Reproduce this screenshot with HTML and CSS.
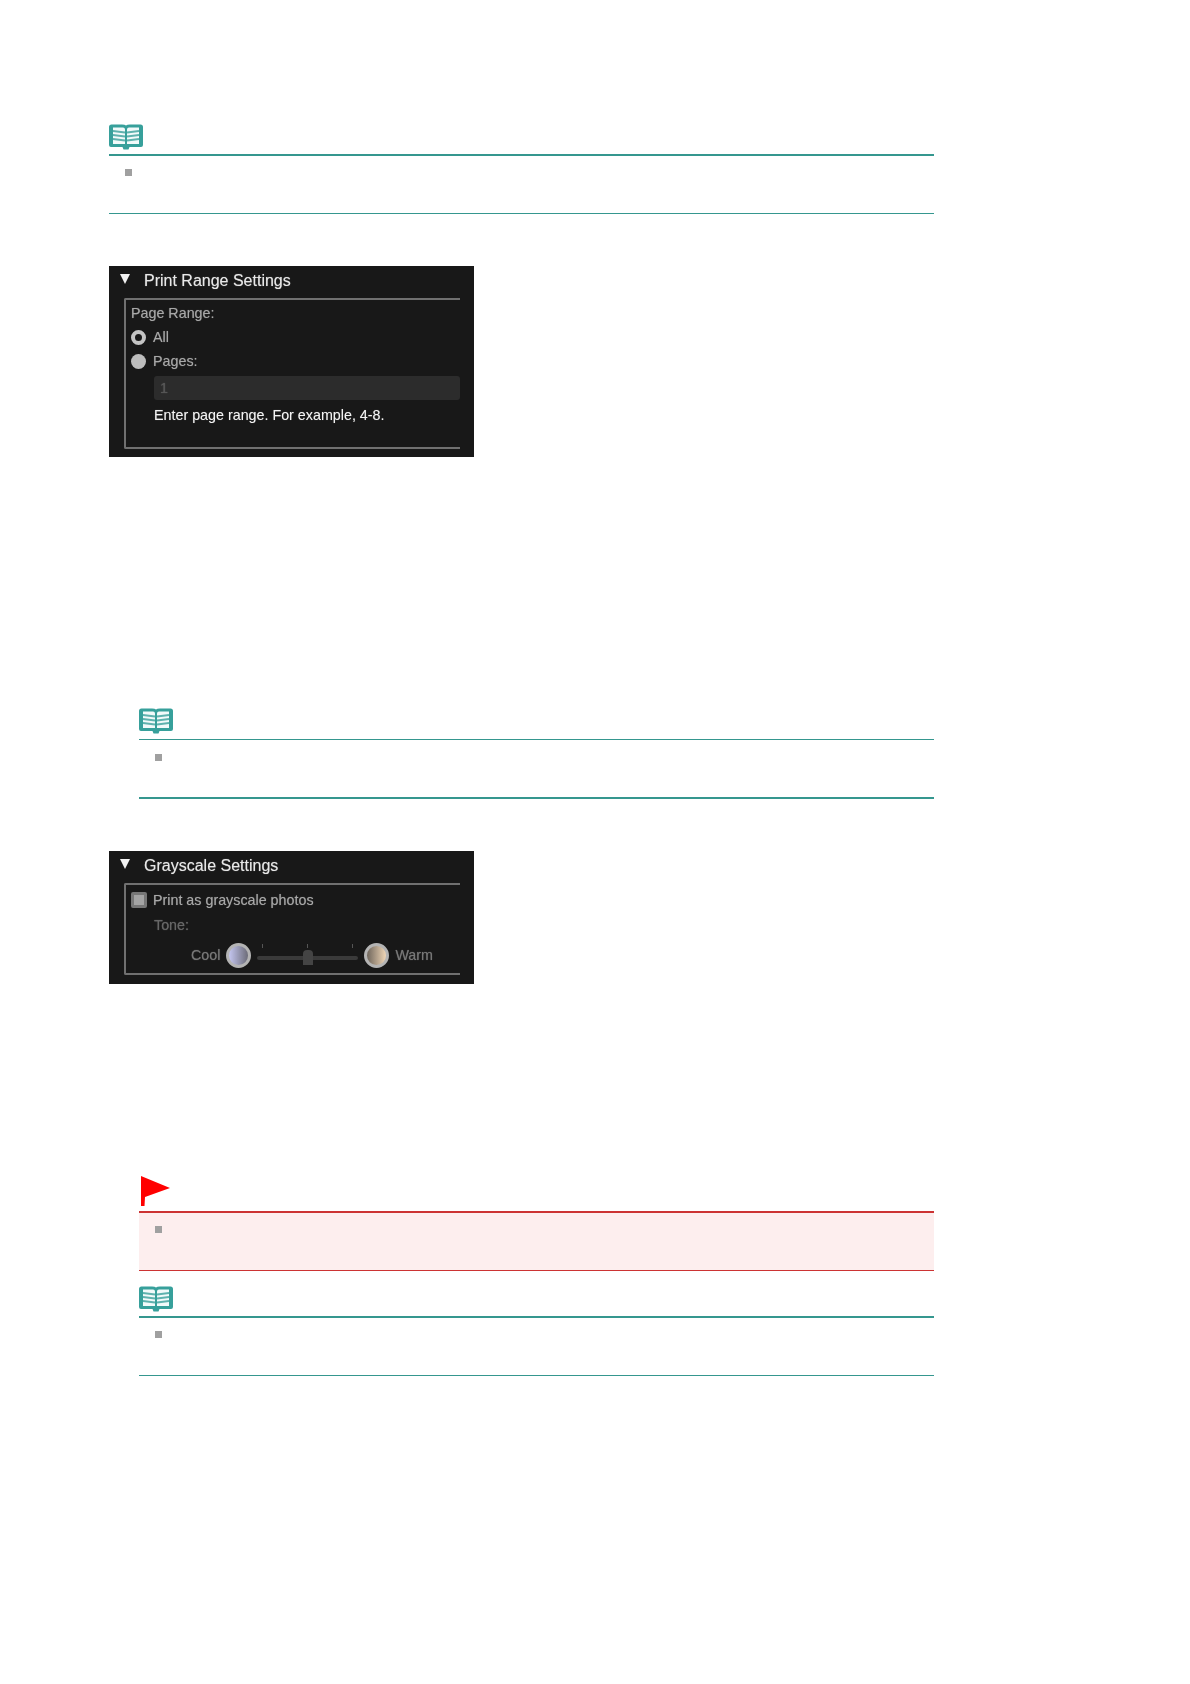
FILE: index.html
```html
<!DOCTYPE html>
<html lang="en">
<head>
    <meta charset="UTF-8">
    <title>Print Settings</title>
    <link rel="stylesheet" href="styles.css">
</head>
<body>
    <svg class="defs" width="0" height="0">
        <symbol id="book" viewBox="0 0 36 26">
            <path d="M1 3 Q1 .5 3.500 .5 H14 Q17 .5 18 1.500 Q19 .5 22 .5 H32.500 Q35 .5 35 3 V21 Q35 23 33 23 H21.500 L20.500 25.500 H15.500 L14.500 23 H3 Q1 23 1 21 Z" fill="#37a09b"/>
            <path d="M5 3.500 H15 Q17 3.500 17 5.500 V20 H5 Z M19 5.500 Q19 3.500 21 3.500 H31 V20 H19 Z" fill="#f2fafa"/>
            <path d="M5 7 L17 8.500 M5 11 L17 12.500 M5 15 L17 16.500 M31 7 L19 8.500 M31 11 L19 12.500 M31 15 L19 16.500" stroke="#5fb2ae" stroke-width="1.800" fill="none"/>
        </symbol>
    </svg>

    <section class="note first">
        <div class="note-head"><svg class="book"><use href="#book"/></svg></div>
        <div class="note-body thick-top"><span class="bullet"></span></div>
    </section>

    <section class="panel range">
        <div class="panel-title"><span class="arrow"></span>Print Range Settings</div>
        <div class="frame">
            <div class="label">Page Range:</div>
            <div class="option"><span class="radio on"></span>All</div>
            <div class="option"><span class="radio"></span>Pages:</div>
            <div class="field">1</div>
            <div class="hint">Enter page range. For example, 4-8.</div>
        </div>
    </section>

    <section class="note indent second">
        <div class="note-head"><svg class="book"><use href="#book"/></svg></div>
        <div class="note-body thick-bottom"><span class="bullet"></span></div>
    </section>

    <section class="panel gray">
        <div class="panel-title"><span class="arrow"></span>Grayscale Settings</div>
        <div class="frame">
            <div class="option check-row"><span class="check"></span>Print as grayscale photos</div>
            <div class="tone">Tone:</div>
            <div class="tone-row">
                <span class="tone-name">Cool</span>
                <span class="knob cool"></span>
                <span class="slider"><i></i><i></i><i></i><b></b></span>
                <span class="knob warm"></span>
                <span class="tone-name">Warm</span>
            </div>
        </div>
    </section>

    <section class="note indent caution">
        <div class="note-head">
            <svg class="flag" viewBox="0 0 30 30"><path d="M1 0 L30 12 L5 21 L4.500 30 L1 30 Z" fill="#ff0000"/></svg>
        </div>
        <div class="note-body thick-top"><span class="bullet"></span></div>
    </section>

    <section class="note indent last">
        <div class="note-head"><svg class="book"><use href="#book"/></svg></div>
        <div class="note-body thick-top"><span class="bullet"></span></div>
    </section>
</body>
</html>
```

FILE: styles.css
```css
body {
    margin: 0;
    padding: 0 256px 0 109px;
    background-color: #fff;
    font-family: "Liberation Sans", Arial, sans-serif;
    height: 1684px;
    box-sizing: border-box;
    overflow: hidden;
}
.defs {
    display: block;
    height: 0;
}

/* note boxes */
.note.first { padding-top: 124px; }
.note.indent { margin-left: 30px; }
.note.second { margin-top: 251px; }
.note.caution { margin-top: 192px; }
.note.last { margin-top: 15px; }
.note-head {
    display: flex;
    align-items: flex-start;
    height: 30px;
}
.second .note-head { height: 31px; }
.caution .note-head { height: 35px; }
.book {
    display: block;
    width: 36px;
    height: 26px;
    margin-left: -1px;
    filter: blur(0.5px);
}
.flag {
    display: block;
    width: 30px;
    height: 30px;
    margin-left: 1px;
    filter: blur(0.3px);
}
.note-body {
    box-sizing: border-box;
    height: 60px;
    padding: 13px 0 0 16px;
    border-top: 1px solid #35978f;
    border-bottom: 1px solid #35978f;
}
.second .note-body { padding-top: 14px; }
.note-body.thick-top { border-top-width: 2px; }
.note-body.thick-bottom { border-bottom-width: 2px; }
.caution .note-body {
    background-color: #fdeeee;
    border-color: #cc3333;
}
.bullet {
    display: block;
    width: 7px;
    height: 7px;
    background-color: #a0a0a0;
}

/* dark settings panels */
.panel {
    box-sizing: border-box;
    width: 365px;
    margin-top: 52px;
    padding: 0 14px 8px 15px;
    background-color: #181818;
    color: #aaa;
    font-size: 14.3px;
}
.panel.range { height: 191px; }
.panel.gray { height: 133px; }
.panel-title {
    display: flex;
    align-items: center;
    height: 30px;
    margin-bottom: 2px;
    color: #e8e8e8;
    font-size: 16px;
    position: relative;
    padding-left: 20px;
    text-shadow: 0 0 1px #888;
    filter: blur(0.3px);
}
.arrow {
    position: absolute;
    left: -4px;
    top: 8px;
    width: 0;
    height: 0;
    border-left: 5.500px solid transparent;
    border-right: 5.500px solid transparent;
    border-top: 10px solid #f2f2f2;
}
.frame {
    box-sizing: border-box;
    padding: 3px 0 0 5px;
    border: 2px solid #707070;
    border-right: none;
    border-radius: 2px 0 0 2px;
    text-shadow: 0 0 1px #666;
    filter: blur(0.3px);
}
.range .frame { height: 151px; }
.gray .frame { height: 92px; }
.label {
    height: 22px;
    line-height: 20px;
    color: #a8a8a8;
}
.option {
    display: flex;
    align-items: center;
    height: 24px;
    gap: 7px;
    color: #a8a8a8;
}
.radio {
    box-sizing: border-box;
    width: 15px;
    height: 15px;
    border-radius: 50%;
    background-color: #bdbdbd;
}
.radio.on {
    background-color: #181818;
    border: 4px solid #c4c4c4;
}
.field {
    box-sizing: border-box;
    height: 24px;
    margin: 3px 0 0 23px;
    padding-left: 6px;
    line-height: 24px;
    background-color: #2c2c2c;
    border-radius: 3px;
    color: #555;
}
.hint {
    margin: 5px 0 0 23px;
    height: 20px;
    line-height: 20px;
    color: #f4f4f4;
}
.check-row {
    height: 24px;
    gap: 6px;
}
.check {
    box-sizing: border-box;
    width: 16px;
    height: 16px;
    background-color: #a4a4a4;
    border: 3px solid #777;
    border-radius: 2px;
}
.tone {
    margin: 3px 0 0 23px;
    height: 20px;
    line-height: 20px;
    color: #666;
}
.tone-row {
    display: flex;
    align-items: center;
    height: 24px;
    margin-top: 8px;
    padding-left: 60px;
    color: #777;
}
.knob {
    box-sizing: border-box;
    width: 25px;
    height: 25px;
    margin: 0 6px 0 6px;
    border-radius: 50%;
    border: 3px solid #b4b4b4;
}
.knob.cool { background: linear-gradient(to right, #c4c6f0, #6c6c78); }
.knob.warm { background: linear-gradient(to right, #6f665c, #f0d6b6); }
.slider {
    display: block;
    position: relative;
    width: 101px;
    height: 4px;
    margin-top: 6px;
    background-color: #3a3a3a;
    border-radius: 2px;
}
.slider i {
    position: absolute;
    top: -12px;
    left: 5px;
    width: 1px;
    height: 4px;
    background-color: #555;
}
.slider i:nth-child(2) { left: 50px; }
.slider i:nth-child(3) { left: 95px; }
.slider b {
    position: absolute;
    left: 46px;
    top: -6px;
    width: 10px;
    height: 15px;
    border-radius: 4px 4px 0 0;
    background-color: #444;
}
```
